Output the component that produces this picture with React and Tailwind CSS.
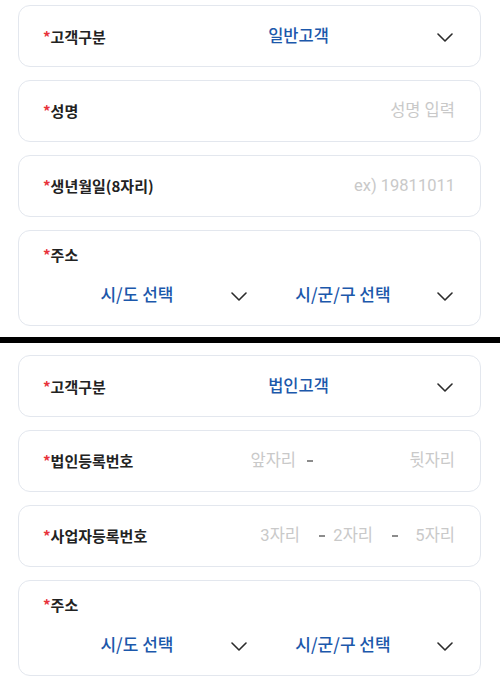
const font = { fontFamily: '"Noto Sans CJK KR", "Noto Sans", sans-serif' };
const latin = { fontFamily: 'Roboto, "Noto Sans CJK KR", sans-serif' };

function Chevron() {
  return (
    <svg width="16" height="9" viewBox="0 0 16 9" fill="none" className="shrink-0">
      <path d="M1 1l7 7 7-7" stroke="#2b2b2b" strokeWidth="1.6" strokeLinecap="round" strokeLinejoin="round" />
    </svg>
  );
}

function Label({ children }) {
  return (
    <span className="text-[15px] font-bold text-[#222] leading-[20px] whitespace-nowrap">
      <span className="text-[#e8333b]">*</span>
      {children}
    </span>
  );
}

function Card({ children, className = '' }) {
  return (
    <div className={`rounded-xl border border-[#e3e7ee] bg-white pl-6 pr-[25px] ${className}`}>
      {children}
    </div>
  );
}

function SelectRow({ label, value }) {
  return (
    <Card className="h-[62px] flex items-center">
      <div className="w-[117px] shrink-0">
        <Label>{label}</Label>
      </div>
      <div className="flex-1 flex items-center">
        <span className="flex-1 text-center text-[16.5px] leading-[22px] font-medium text-[#1c58ab] -mt-[3px]">{value}</span>
        <div className="pt-[3px] pr-[2px]">
          <Chevron />
        </div>
      </div>
    </Card>
  );
}

function InputRow({ label, children }) {
  return (
    <Card className="h-[62px] flex items-center">
      <Label>{label}</Label>
      <div className="ml-auto flex items-center text-[16.5px] text-[#c9c9c9]" style={latin}>
        {children}
      </div>
    </Card>
  );
}

function Dash() {
  return <span className="inline-block w-[6px] h-[2px] bg-[#8c8c8c] align-middle" />;
}

function AddressCard() {
  return (
    <Card className="h-[96px] pt-[11px]">
      <Label>주소</Label>
      <div className="mt-[8px] h-[40px] flex items-center">
        {['시/도 선택', '시/군/구 선택'].map((t) => (
          <div key={t} className="flex-1 flex items-center">
            <span className="flex-1 text-center text-[17px] leading-[22px] font-medium text-[#1c58ab]">{t}</span>
            <div className="pt-[5px] pr-[2px]">
              <Chevron />
            </div>
          </div>
        ))}
      </div>
    </Card>
  );
}

export default function App() {
  return (
    <div className="w-[500px] h-[690px] bg-white overflow-hidden" style={font}>
      <div className="pt-[5px] pb-[11px] pl-[18px] pr-[19px] flex flex-col gap-[13px]">
        <SelectRow label="고객구분" value="일반고객" />
        <InputRow label="성명">
          <span>성명 입력</span>
        </InputRow>
        <InputRow label="생년월일(8자리)">
          <span>ex) 19811011</span>
        </InputRow>
        <AddressCard />
      </div>
      <div className="h-[6px] bg-black" />
      <div className="pt-[12px] pl-[18px] pr-[19px] flex flex-col gap-[13px]">
        <SelectRow label="고객구분" value="법인고객" />
        <InputRow label="법인등록번호">
          <span>앞자리</span>
          <span className="ml-[11px] flex items-center"><Dash /></span>
          <span className="w-[142px] text-right">뒷자리</span>
        </InputRow>
        <InputRow label="사업자등록번호">
          <span>3자리</span>
          <span className="ml-[19px] flex items-center"><Dash /></span>
          <span className="w-[48px] text-right">2자리</span>
          <span className="ml-[19px] flex items-center"><Dash /></span>
          <span className="w-[57px] text-right">5자리</span>
        </InputRow>
        <AddressCard />
      </div>
    </div>
  );
}
